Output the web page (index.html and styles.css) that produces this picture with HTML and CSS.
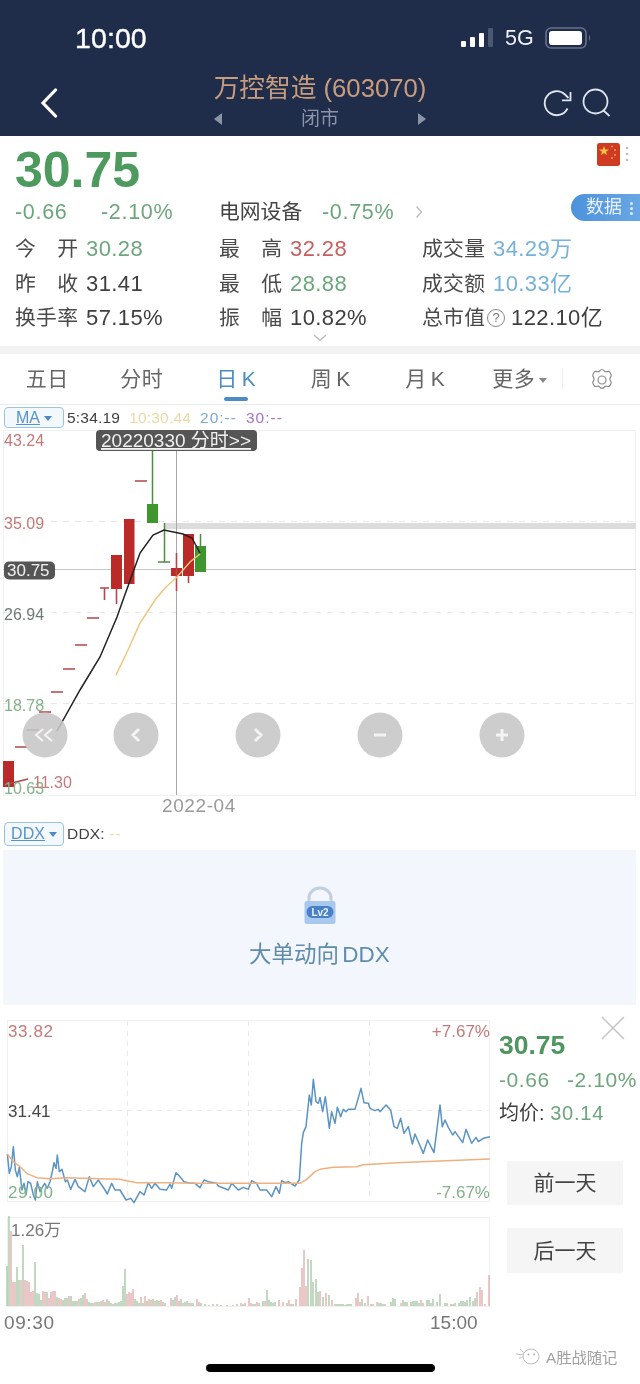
FILE: index.html
```html
<!DOCTYPE html>
<html lang="zh-CN">
<head>
<meta charset="utf-8">
<title>万控智造 (603070)</title>
<link rel="stylesheet" href="styles.css">
</head>
<body>
<div class="page">
  <header class="header">
    <div class="status">
      <span class="clock">10:00</span>
      <svg class="signal" width="32" height="20" viewBox="0 0 32 20"><rect x="0" y="13" width="5" height="6" rx="1" fill="#fff"/><rect x="9" y="9" width="5" height="10" rx="1" fill="#fff"/><rect x="18" y="5" width="5" height="14" rx="1" fill="#fff"/><rect x="27" y="0" width="5" height="19" rx="1" fill="#4c5873"/></svg>
      <span class="net">5G</span>
      <svg class="battery" width="46" height="22" viewBox="0 0 46 22"><rect x="1" y="1" width="40" height="20" rx="5" fill="none" stroke="#67718a" stroke-width="1.6"/><rect x="4" y="4" width="33" height="14" rx="3" fill="#fff"/><path d="M44 8c1.500 1 1.500 5 0 6z" fill="#67718a"/></svg>
    </div>
    <div class="titlebar">
      <svg class="back" width="18" height="30" viewBox="0 0 18 30"><path d="M15.500 2 3 15l12.500 13" fill="none" stroke="#fff" stroke-width="3.200" stroke-linecap="round"/></svg>
      <div class="title">
        <div class="name">万控智造 (603070)</div>
        <div class="market"><i class="tri tri-l"></i><span>闭市</span><i class="tri tri-r"></i></div>
      </div>
      <div class="tools">
        <svg width="30" height="30" viewBox="0 0 30 30"><path d="M24.500 20.500A12 12 0 1 1 22 6.500L25.500 10" fill="none" stroke="#dfe5ee" stroke-width="1.800"/><path d="M19 12.300h8.500V4" fill="none" stroke="#dfe5ee" stroke-width="1.800"/></svg>
        <svg width="30" height="30" viewBox="0 0 30 30"><circle cx="13.500" cy="13.500" r="12" fill="none" stroke="#dfe5ee" stroke-width="1.800"/><path d="m21.500 22.500 6 5.500" stroke="#dfe5ee" stroke-width="1.800"/></svg>
      </div>
    </div>
  </header>

  <section class="quote">
    <svg class="flag" width="34" height="24" viewBox="0 0 34 24"><rect width="23" height="23" rx="2.500" fill="#cf3a22"/><path d="m7 3 1.300 3.500H12L9 8.700l1.100 3.500L7 10l-3.100 2.200L5 8.700 2 6.500h3.700z" fill="#f5c443"/><g fill="#eaa13c"><circle cx="15" cy="3.500" r="1"/><circle cx="18" cy="7" r="1"/><circle cx="18" cy="12" r="1"/><circle cx="15" cy="15" r="1"/></g><g fill="#bbb"><circle cx="30" cy="5" r="1.300"/><circle cx="30" cy="11" r="1.300"/><circle cx="30" cy="17" r="1.300"/></g></svg>
    <div class="data-tab"><span>数据</span><i class="vdots"></i></div>
    <div class="price">30.75</div>
    <div class="change">
      <span class="g chg1">-0.66</span><span class="g chg2">-2.10%</span>
      <span class="sector">电网设备</span><span class="g chg3">-0.75%</span>
      <svg class="more" width="8" height="14" viewBox="0 0 8 14"><path d="m1.500 1.500 5 5.500-5 5.500" fill="none" stroke="#bbb" stroke-width="1.300"/></svg>
    </div>
    <div class="stats">
      <div class="stat"><span class="lab"><b>今</b><b>开</b></span><span class="g">30.28</span></div>
      <div class="stat"><span class="lab"><b>最</b><b>高</b></span><span class="r">32.28</span></div>
      <div class="stat"><span class="lab"><b>成</b><b>交</b><b>量</b></span><span class="b">34.29万</span></div>
      <div class="stat"><span class="lab"><b>昨</b><b>收</b></span><span class="d">31.41</span></div>
      <div class="stat"><span class="lab"><b>最</b><b>低</b></span><span class="g">28.88</span></div>
      <div class="stat"><span class="lab"><b>成</b><b>交</b><b>额</b></span><span class="b">10.33亿</span></div>
      <div class="stat"><span class="lab"><b>换</b><b>手</b><b>率</b></span><span class="d">57.15%</span></div>
      <div class="stat"><span class="lab"><b>振</b><b>幅</b></span><span class="d">10.82%</span></div>
      <div class="stat"><span class="lab"><b>总</b><b>市</b><b>值</b></span><i class="help">?</i><span class="d">122.10亿</span></div>
    </div>
    <svg class="expand" width="14" height="8" viewBox="0 0 14 8"><path d="m1 1 6 5.500L13 1" fill="none" stroke="#bbb" stroke-width="1.300"/></svg>
  </section>

  <nav class="tabs">
    <span class="tab">五日</span>
    <span class="tab">分时</span>
    <span class="tab active">日 K</span>
    <span class="tab">周 K</span>
    <span class="tab">月 K</span>
    <span class="tab">更多<i class="caret"></i></span>
    <span class="tab-sep"></span>
    <svg class="gear" width="24" height="24" viewBox="0 0 24 24"><path d="M12 1.500c.8 0 1.500.5 2.200 1.300.6.800 1.800 1.100 2.800.8 1-.3 1.900-.3 2.500.3.700.7 1.200 1.700 1.600 2.700.3 .9 .1 1.800-.6 2.500-.7.800-.7 2.900 0 3.700.7.700 .9 1.600.6 2.500-.4 1-.9 2-1.600 2.700-.6.6-1.500.6-2.500.3-1-.3-2.200 0-2.800.8-.7.8-1.400 1.300-2.200 1.300s-1.500-.5-2.200-1.300c-.6-.8-1.800-1.100-2.800-.8-1 .3-1.900.3-2.500-.3-.7-.7-1.200-1.700-1.600-2.700-.3-.9-.1-1.800.6-2.500.7-.8.7-2.900 0-3.700-.7-.7-.9-1.600-.6-2.500.4-1 .9-2 1.600-2.700.6-.6 1.500-.6 2.500-.3 1 .3 2.200 0 2.800-.8.7-.8 1.400-1.300 2.200-1.300z" fill="none" stroke="#8a8a8a" stroke-width="1.200"/><circle cx="12" cy="12" r="4" fill="none" stroke="#8a8a8a" stroke-width="1.200"/></svg>
  </nav>

  <div class="legend legend-ma">
    <span class="chip"><u>MA</u><i class="caret caret-b"></i></span>
    <span class="d">5:34.19</span><span class="y">10:30.44</span><span class="bl">20:--</span><span class="p">30:--</span>
  </div>

  <svg class="kchart" width="640" height="388" viewBox="0 430 640 388">
    <rect x="3.500" y="430.500" width="632" height="365" fill="none" stroke="#f0f0f0"/>
    <path d="M3 818.500h633" stroke="#f2f2f2"/>
    <path d="M3 521.500h633M3 612.500h633M3 703.500h633" stroke="#e8e8e8" stroke-dasharray="6 6"/>
    <rect x="164" y="523" width="472" height="6" fill="#dcdcdc"/>
    <path d="M3 569.500h633" stroke="#c8c8c8"/>
    <path d="M176.500 430v365" stroke="#a8a8a8"/>
    <g fill="#b92a28">
      <rect x="3" y="761" width="11" height="26"/>
      <rect x="111" y="555" width="11" height="34"/>
      <rect x="124" y="519" width="10.500" height="65"/>
      <rect x="171" y="568" width="11" height="8"/>
      <rect x="183" y="534" width="11" height="42"/>
    </g>
    <g fill="none" stroke="#b3474a" stroke-width="1.600">
      <path d="M15 747h12M27 730h12M39 712h12M51 692h12M63 669h12M75 645h12M87 618h12M100 588h9M104.500 588v12M116.500 589v15M135 481h12M176.500 553v38M188.500 576v7"/>
      <path d="M4 785l24-6" stroke="#a8484a"/>
    </g>
    <g fill="#3f962f">
      <rect x="147" y="504" width="11" height="19"/>
      <rect x="195" y="546" width="11" height="26"/>
    </g>
    <path d="M152.500 450v54M164.500 523v39M158 562h12M200.500 534v12" fill="none" stroke="#4f8a46" stroke-width="1.500"/>
    <polyline points="116,675 128,650 140,623 155,600 165,588 177,577 190,562 200,554" fill="none" stroke="#efc67c" stroke-width="1.500"/>
    <polyline points="57,731 80,690 100,657 117,617 123,600 140,553 153,535 164,530 183,534 192,538 200,553" fill="none" stroke="#222" stroke-width="1.500"/>
    <text class="t16 tr" x="4" y="446">43.24</text>
    <text class="t16 tr" x="4" y="529">35.09</text>
    <text class="t16 tg0" x="4" y="620">26.94</text>
    <text class="t16 tgr" x="4" y="711">18.78</text>
    <text class="t16 tgr" x="4" y="794">10.63</text>
    <text class="t16 tr" x="33" y="788">11.30</text>
    <rect x="4" y="561.500" width="51" height="18" rx="5" fill="#555"/>
    <text class="t17 tw" x="7" y="576">30.75</text>
    <rect x="96" y="430" width="161" height="21" rx="4" fill="#555"/>
    <text class="t19 tw" x="101" y="447" text-decoration="underline">20220330 分时&gt;&gt;</text>
    <text class="t19 tg1 wide" x="162" y="812">2022-04</text>
    <g fill="#c6c6c6" fill-opacity=".88">
      <circle cx="45" cy="735" r="22.500"/>
      <circle cx="136" cy="735" r="22.500"/>
      <circle cx="258" cy="735" r="22.500"/>
      <circle cx="380" cy="735" r="22.500"/>
      <circle cx="502" cy="735" r="22.500"/>
    </g>
    <path d="M43 729l-7 6 7 6M52 729l-7 6 7 6" fill="none" stroke="#f4f4f4" stroke-width="2"/>
    <path d="M139 729l-6 6 6 6M255 729l6 6-6 6M374 735h12M496 735h12M502 729v12" fill="none" stroke="#f4f4f4" stroke-width="3"/>
  </svg>

  <div class="legend legend-ddx">
    <span class="chip"><u>DDX</u><i class="caret caret-b"></i></span>
    <span class="d">DDX:</span><span class="y">--</span>
  </div>

  <section class="ddx">
    <svg width="32" height="40" viewBox="0 0 32 40"><path d="M5 16v-4a11 10 0 0 1 22 0v4" fill="none" stroke="#c3cfdc" stroke-width="3"/><rect x="0.500" y="15" width="31" height="23" rx="2.500" fill="#a9c8ee"/><rect x="2.500" y="20" width="27" height="12" rx="6" fill="#4a80c8"/><text class="lv" x="16" y="29.500">Lv2</text></svg>
    <div class="ddx-text">大单动向 DDX</div>
  </section>

  <section class="intraday">
    <svg class="ichart" width="495" height="330" viewBox="0 1005 495 330">
      <rect x="7.500" y="1020.500" width="482" height="181" fill="none" stroke="#f0f0f0"/>
      <path d="M7 1110.500h482" stroke="#eaeaea" stroke-dasharray="5 5"/>
      <path d="M127.500 1021v180M248.500 1021v180M369.500 1021v180" stroke="#eaeaea" stroke-dasharray="5 5"/>
      <g transform="translate(0 1010) scale(.33333)" fill="none" stroke-width="4.500" stroke-linejoin="round">
        <polyline stroke="#5b93c4" points="22,432 28,490 34,470 40,410 46,480 52,500 58,472 66,540 72,520 78,555 84,515 92,520 100,555 106,570 112,515 120,545 128,530 134,520 142,535 150,515 158,480 162,458 168,475 172,435 178,485 186,478 196,515 202,510 212,538 225,508 235,530 255,545 268,500 280,530 295,510 315,540 322,552 335,520 345,540 360,540 378,570 392,565 402,578 420,545 432,555 445,518 455,535 465,520 480,538 500,540 510,522 515,535 528,488 540,500 552,515 570,520 585,520 600,533 612,510 625,515 650,520 655,528 685,540 695,520 715,540 730,532 745,538 755,512 770,520 780,540 800,540 815,560 828,530 838,550 845,512 855,518 865,515 885,528 898,510 905,400 910,368 918,350 928,255 934,285 940,208 948,275 955,280 960,262"/>
        <polyline stroke="#efb07f" points="22,432 40,455 60,470 80,490 110,503 150,506 200,503 300,506 360,508 380,512 410,518 500,518 600,520 900,520 920,508 945,485 960,478"/>
      </g>
      <g transform="translate(280 1010) scale(.33333)" fill="none" stroke-width="4.500" stroke-linejoin="round">
        <polyline stroke="#5b93c4" points="120,262 128,305 136,260 148,355 155,305 165,340 172,292 182,320 190,298 198,305 205,298 225,298 243,235 252,278 265,280 270,295 285,302 295,298 300,305 318,285 332,300 342,350 352,355 362,325 372,370 385,350 397,402 405,372 430,430 443,390 462,428 480,285 487,350 495,330 505,352 518,375 525,365 548,398 558,358 575,400 588,382 595,395 610,385 630,380"/>
        <polyline stroke="#efb07f" points="120,478 160,472 230,470 250,464 350,458 480,453 630,447"/>
      </g>
      <text class="t17 tr wide" x="8" y="1037">33.82</text>
      <text class="t17 td" x="8" y="1117">31.41</text>
      <text class="t17 tgr wide" x="8" y="1198">29.00</text>
      <text class="t17 tr" x="490" y="1037" text-anchor="end">+7.67%</text>
      <text class="t17 tgr" x="490" y="1198" text-anchor="end">-7.67%</text>
      <rect x="7.500" y="1217.500" width="482" height="89" fill="none" stroke="#f0f0f0"/>
      <path fill="none" stroke="#85b282" stroke-width="1" d="M7 1306v-40M9 1306v-90M17 1306v-39M19 1306v-26M23 1306v-61M35 1306v-44M37 1306v-13M39 1306v-12M41 1306v-6M47 1306v-14M57 1306v-9M63 1306v-6M65 1306v-8M67 1306v-8M71 1306v-10M73 1306v-5M75 1306v-5M77 1306v-5M81 1306v-8M83 1306v-11M89 1306v-4M91 1306v-3M93 1306v-3M97 1306v-4M101 1306v-5M105 1306v-4M109 1306v-5M111 1306v-3M113 1306v-2M115 1306v-3M117 1306v-3M119 1306v-4M121 1306v-5M123 1306v-20M125 1306v-37M135 1306v-7M137 1306v-5M139 1306v-3M143 1306v-3M147 1306v-5M153 1306v-7M157 1306v-6M159 1306v-5M163 1306v-4M173 1306v-6M175 1306v-9M181 1306v-7M185 1306v-4M187 1306v-5M191 1306v-3M193 1306v-3M201 1306v-3M205 1306v-2M209 1306v-1M213 1306v-2M221 1306v-1M227 1306v-1M233 1306v-1M237 1306v-2M243 1306v-2M253 1306v-2M255 1306v-2M259 1306v-3M263 1306v-5M267 1306v-16M269 1306v-6M271 1306v-4M273 1306v-3M275 1306v-4M287 1306v-3M291 1306v-2M293 1306v-2M308 1306v-47M311 1306v-46M313 1306v-24M316 1306v-27M318 1306v-14M323 1306v-9M329 1306v-11M335 1306v-2M337 1306v-2M339 1306v-2M341 1306v-2M343 1306v-2M345 1306v-1M347 1306v-2M349 1306v-2M351 1306v-2M362 1306v-7M365 1306v-3M371 1306v-2M373 1306v-2M379 1306v-3M381 1306v-3M383 1306v-2M385 1306v-2M391 1306v-4M393 1306v-8M395 1306v-7M403 1306v-6M405 1306v-4M407 1306v-4M411 1306v-4M413 1306v-5M415 1306v-5M417 1306v-5M419 1306v-3M423 1306v-3M427 1306v-6M429 1306v-6M431 1306v-3M433 1306v-7M437 1306v-4M440 1306v-12M445 1306v-3M447 1306v-3M451 1306v-2M453 1306v-2M455 1306v-3M459 1306v-3M461 1306v-5M463 1306v-5M465 1306v-4M467 1306v-6M470 1306v-9M473 1306v-5M475 1306v-8"/>
      <path fill="none" stroke="#d68f90" stroke-width="1" d="M11 1306v-75M13 1306v-24M15 1306v-24M21 1306v-26M25 1306v-26M27 1306v-25M29 1306v-24M31 1306v-14M33 1306v-15M43 1306v-15M45 1306v-14M49 1306v-8M51 1306v-14M53 1306v-15M55 1306v-15M59 1306v-8M61 1306v-7M69 1306v-10M79 1306v-7M85 1306v-13M87 1306v-7M95 1306v-4M99 1306v-4M103 1306v-6M107 1306v-7M127 1306v-12M129 1306v-14M131 1306v-13M133 1306v-17M141 1306v-9M145 1306v-10M149 1306v-7M151 1306v-6M155 1306v-5M161 1306v-6M165 1306v-3M171 1306v-8M177 1306v-11M179 1306v-5M183 1306v-3M189 1306v-3M197 1306v-7M199 1306v-4M217 1306v-2M241 1306v-3M245 1306v-3M249 1306v-8M251 1306v-3M257 1306v-4M265 1306v-5M279 1306v-6M283 1306v-4M289 1306v-6M296 1306v-7M300 1306v-19M302 1306v-38M304 1306v-56M306 1306v-20M320 1306v-15M326 1306v-13M332 1306v-6M356 1306v-8M358 1306v-13M360 1306v-4M368 1306v-10M377 1306v-4M401 1306v-3M421 1306v-6M477 1306v-14M480 1306v-19M482 1306v-16M485 1306v-2M489 1306v-31"/>
      <text class="t17 tg2" x="11" y="1236">1.26万</text>
      <text class="t19 tg2 wide" x="4" y="1329">09:30</text>
      <text class="t19 tg2" x="430" y="1329">15:00</text>
    </svg>
    <aside class="side">
      <svg class="close" width="24" height="24" viewBox="0 0 24 24"><path d="m1 1 22 22M23 1 1 23" stroke="#c4c4c4" stroke-width="1.500"/></svg>
      <div class="side-price">30.75</div>
      <div class="side-chg"><span class="g">-0.66</span><span class="g">-2.10%</span></div>
      <div class="side-avg"><span class="d">均价:</span> <span class="g">30.14</span></div>
      <div class="btn btn-prev">前一天</div>
      <div class="btn btn-next">后一天</div>
    </aside>
  </section>

  <footer class="foot">
    <span class="homebar"></span>
    <span class="mark">
      <svg width="26" height="20" viewBox="0 0 26 20"><g fill="none" stroke="#bdbdbd" stroke-width="1"><path d="M1 7.500c3 1.500 5 1.500 7 .5M4 12c2 0 3-.5 4.500-1.500M5 3c2 1.500 3.500 3 4 4"/><ellipse cx="16" cy="10.500" rx="8" ry="7.500"/></g><circle cx="13.500" cy="8.500" r=".9" fill="#aaa"/><circle cx="19" cy="8.500" r=".9" fill="#aaa"/></svg>
      <span>A胜战随记</span>
    </span>
  </footer>
</div>
</body>
</html>
```
FILE: styles.css
```css
* { box-sizing: border-box; }
html, body { margin: 0; padding: 0; background: #fff; }
body {
  font-family: "Liberation Sans", "Noto Sans CJK SC", sans-serif;
  color: #444;
  width: 640px;
  height: 1384px;
  overflow: hidden;
}
i { font-style: normal; }
b { font-weight: 400; }
.page { width: 640px; height: 1384px; filter: blur(.4px); }

/* shared text colours */
.g { color: #6da67c; }
.r { color: #c75f60; }
.b { color: #74b2da; }
.d { color: #3f3f3f; }
.y { color: #ecd9a3; }
.bl { color: #7fa9c8; }
.p { color: #a673c4; }

/* header */
.header { height: 136px; background: #1f2c4a; color: #fff; }
.status { height: 72px; display: flex; align-items: center; padding: 4px 0 0 75px; }
.clock { font-size: 28.500px; width: 386px; letter-spacing: .1px; -webkit-text-stroke: .4px #fff; }
.signal { margin-right: 12px; margin-top: 0; }
.net { font-size: 21.500px; width: 40px; color: #eef1f6; }
.titlebar { height: 64px; display: flex; position: relative; }
.back { margin: 16px 0 0 40px; }
.title { position: absolute; left: 170px; width: 300px; top: 0; text-align: center; }
.name { font-size: 25.700px; line-height: 32px; color: #c89d7d; }
.market { display: flex; justify-content: center; align-items: center; color: #8b95a9; font-size: 19px; line-height: 28px; height: 30px; }
.market span { width: 196px; text-align: center; }
.tri { width: 0; height: 0; border-top: 6px solid transparent; border-bottom: 6px solid transparent; }
.tri-l { border-right: 8px solid #8b95a9; }
.tri-r { border-left: 8px solid #8b95a9; }
.tools { margin-left: auto; display: flex; gap: 9px; padding: 16px 28px 0 0; height: 46px; }

/* quote */
.quote { height: 210px; position: relative; padding: 9px 0 0 15px; }
.flag { position: absolute; left: 597px; top: 7px; }
.data-tab {
  position: absolute; right: 0; top: 58px; width: 69px; height: 27px;
  background: linear-gradient(90deg, #4c92dc, #6aa6e4);
  border-radius: 14px 0 0 14px;
  color: #e8f2fc; font-size: 18px; line-height: 27px; padding-left: 15px;
}
.vdots { position: absolute; left: 59px; top: 8px; width: 3px; height: 3px; border-radius: 50%; background: #dcebfa; box-shadow: 0 5px 0 #dcebfa, 0 10px 0 #dcebfa; }
.price { font-size: 50px; font-weight: 700; color: #4c9a5e; line-height: 50px; height: 51px; }
.change { font-size: 21.500px; height: 30px; line-height: 30px; display: flex; align-items: center; margin-top: 1px; letter-spacing: .7px; }
.chg1 { width: 86px; }
.chg2 { width: 118px; }
.sector { width: 103px; color: #444; font-size: 20.800px; letter-spacing: 0; }
.chg3 { width: 93px; }
.stats { display: grid; grid-template-columns: 204px 203px 1fr; grid-auto-rows: 34.500px; font-size: 22px; line-height: 34px; margin-top: 5px; }
.stat { display: flex; align-items: center; }
.lab { display: flex; justify-content: space-between; width: 63px; font-size: 20.800px; color: #4a4a4a; margin-right: 8px; }
.stat .d, .stat .g, .stat .r, .stat .b { white-space: nowrap; letter-spacing: .4px; }
.help { width: 18px; height: 18px; border: 1px solid #888; border-radius: 50%; font-size: 13px; line-height: 16px; text-align: center; color: #777; margin: 0 6px 0 -6px; flex: none; }
.expand { position: absolute; left: 313px; top: 198px; }

/* tabs */
.tabs { border-top: 8px solid #f2f2f2; height: 59px; display: flex; align-items: center; border-bottom: 1px solid #ececec; font-size: 21px; color: #666; position: relative; padding-bottom: 4px; }
.tab { width: 94.500px; text-align: center; flex: none; letter-spacing: .4px; word-spacing: -2px; }
.tab.active { color: #4c8bc4; position: relative; }
.tab.active::after { content: ""; position: absolute; left: 35px; width: 24px; height: 4px; bottom: -9px; background: #4c8bc4; border-radius: 2px; }
.caret { display: inline-block; width: 0; height: 0; border-left: 4px solid transparent; border-right: 4px solid transparent; border-top: 5px solid #888; margin-left: 4px; vertical-align: 3px; }
.tab-sep { width: 1px; height: 22px; background: #eee; margin: 4px 0 0 -5px; }
.gear { margin: 6px 0 0 27px; }

/* legend rows */
.legend { display: flex; align-items: center; font-size: 15.500px; }
.legend-ma { height: 25px; }
.legend-ddx { height: 32px; }
.legend span + span { margin-left: 9px; letter-spacing: .2px; }
.legend .bl, .legend .p { letter-spacing: 1px; }
.legend .chip + span { margin-left: 3px; }
.legend-ddx .y { margin-left: 5px; }
.chip { margin-left: 4px; width: 60px; height: 21px; border: 1px solid #9cc3e3; border-radius: 4px; background: #f3f8fd; color: #5a93c8; text-align: center; line-height: 19px; font-size: 16px; }
.legend-ddx .chip { height: 24px; line-height: 22px; }
.caret-b { border-top-color: #4d8ac4; margin-left: 4px; vertical-align: 2px; }

/* svg text */
.kchart, .ichart { display: block; flex: none; }
svg text { font-family: "Liberation Sans", "Noto Sans CJK SC", sans-serif; }
.t16 { font-size: 16px; }
.t17 { font-size: 17px; }
.t19 { font-size: 19px; }
.wide { letter-spacing: .6px; }
.tr { fill: #c47a78; }
.tg0 { fill: #6f7a72; }
.tgr { fill: #83b28a; }
.tw { fill: #f0f0f0; }
.tg1 { fill: #9a9a9a; }
.tg2 { fill: #777; }
.td { fill: #444; }

/* ddx panel */
.ddx { margin: 0 4px 0 3px; height: 155px; background: #f3f7fd; display: flex; flex-direction: column; align-items: center; padding-top: 36px; }
.lv { font-size: 10px; font-weight: 700; fill: #eaf2fb; text-anchor: middle; }
.ddx-text { font-size: 22.500px; color: #5f8cab; margin-top: 14px; line-height: 30px; word-spacing: -3px; }

/* intraday */
.intraday { display: flex; height: 330px; }
.side { width: 145px; padding: 11px 0 0 4px; position: relative; }
.close { position: absolute; left: 106px; top: 11px; }
.side-price { font-size: 26.500px; font-weight: 700; color: #4f9560; line-height: 30px; margin-top: 14px; }
.side-chg { font-size: 21px; line-height: 30px; display: flex; gap: 17px; margin-top: 5px; white-space: nowrap; letter-spacing: .6px; }
.side-avg { font-size: 20px; line-height: 30px; margin-top: 3px; white-space: nowrap; }
.side-avg .g { letter-spacing: .8px; }
.btn { margin-left: 8px; width: 116px; background: #f5f5f5; text-align: center; font-size: 21px; color: #444; }
.btn-prev { height: 44px; line-height: 44px; margin-top: 33px; }
.btn-next { height: 45px; line-height: 45px; margin-top: 23px; }

/* footer */
.foot { height: 49px; display: flex; align-items: center; padding-left: 206px; position: relative; }
.homebar { width: 229px; height: 8px; background: #000; border-radius: 4px; margin-top: 16px; }
.mark { position: absolute; left: 515px; top: 10px; display: flex; align-items: center; gap: 5px; font-size: 15.300px; color: #a0a0a0; white-space: nowrap; }
```
